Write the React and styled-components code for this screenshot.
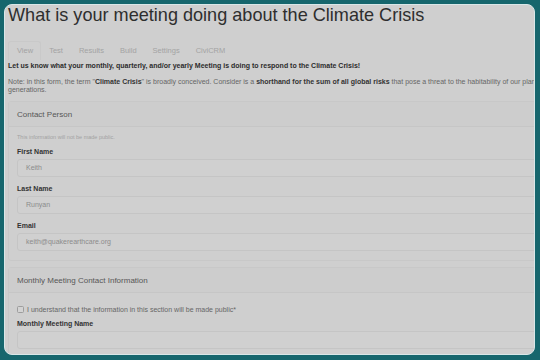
import React from "react";
import styled, { createGlobalStyle } from "styled-components";

const Global = createGlobalStyle`
  html, body { margin: 0; padding: 0; background: #16666d; }
  body { font-family: "Liberation Sans", Arial, sans-serif; }
  * { box-sizing: border-box; }
`;

const Frame = styled.div`
  width: 540px;
  height: 360px;
  padding: 4px 5px 5px 4px;
  background: #16666d;
`;

const Card = styled.div`
  height: 100%;
  background: #cfcfcf;
  border: 1px solid #d9e7e8;
  border-radius: 8px;
  overflow: hidden;
  padding: 0 0 0 3px;
`;

const Content = styled.div`
  width: 640px;
`;

const Title = styled.h1`
  margin: 1px 0 0;
  font-weight: normal;
  font-size: 18.1px;
  line-height: 18px;
  color: #2e2e2e;
  white-space: nowrap;
`;

const Tabs = styled.div`
  display: flex;
  margin-top: 17px;
  height: 19px;
`;

const Tab = styled.div`
  padding: 0 7px 0 8px;
  margin-right: -1px;
  font-size: 7.5px;
  line-height: 18px;
  color: #a3a3a3;
  border: 1px solid ${(p) => (p.$active ? "#c9c9c9" : "transparent")};
  border-bottom: none;
  border-radius: 3px 3px 0 0;
`;

const Lead = styled.p`
  margin: 1px 0 0;
  font-size: 7px;
  line-height: 9px;
  font-weight: bold;
  color: #2c2c2c;
  white-space: nowrap;
`;

const Note = styled.p`
  margin: 8px 0 0;
  font-size: 7px;
  line-height: 8px;
  color: #666;
  b { color: #333; }
`;

const Panel = styled.section`
  margin-top: ${(p) => p.$mt}px;
  border: 1px solid #c8c8c8;
  border-radius: 3px;
`;

const PanelHeading = styled.div`
  height: 25px;
  padding: 0 8px;
  font-size: 8px;
  line-height: 25px;
  color: #575757;
  border-bottom: 1px solid #c6c6c6;
  background: #cdcdcd;
`;

const PanelBody = styled.div`
  padding: ${(p) => p.$pt}px 8px 3px;
`;

const Hint = styled.div`
  font-size: 5.5px;
  line-height: 8px;
  color: #a2a2a2;
  margin-bottom: 5px;
`;

const Field = styled.div`
  margin-bottom: 6px;
`;

const Label = styled.div`
  font-size: 7px;
  line-height: 11px;
  font-weight: bold;
  color: #333;
  margin-bottom: 2px;
`;

const Input = styled.div`
  height: 18px;
  border: 1px solid #c5c5c5;
  border-radius: 3px;
  background: #d0d0d0;
  padding: 0 8px;
  font-size: 7px;
  line-height: 16px;
  color: #8c8c8c;
`;

const CheckRow = styled.label`
  display: flex;
  align-items: center;
  gap: 3px;
  height: 10px;
  font-size: 7px;
  color: #666;
  margin-bottom: 4px;
`;

const Box = styled.span`
  width: 7px;
  height: 7px;
  border: 1px solid #9d9d9d;
  border-radius: 1.5px;
  background: #d3d3d3;
  flex: none;
`;

export default function App() {
  return (
    <>
      <Global />
      <Frame>
        <Card>
          <Content>
            <Title>What is your meeting doing about the Climate Crisis</Title>
            <Tabs>
              <Tab $active>View</Tab>
              <Tab>Test</Tab>
              <Tab>Results</Tab>
              <Tab>Build</Tab>
              <Tab>Settings</Tab>
              <Tab>CiviCRM</Tab>
            </Tabs>
            <Lead>
              Let us know what your monthly, quarterly, and/or yearly Meeting is doing to respond to the Climate Crisis!
            </Lead>
            <Note>
              Note: in this form, the term "<b>Climate Crisis</b>" is broadly conceived. Consider is a{" "}
              <b>shorthand for the sum of all global risks</b> that pose a threat to the habitability of our planet for future
              <br />
              generations.
            </Note>
            <Panel $mt={7}>
              <PanelHeading>Contact Person</PanelHeading>
              <PanelBody $pt={6}>
                <Hint>This information will not be made public.</Hint>
                <Field>
                  <Label>First Name</Label>
                  <Input>Keith</Input>
                </Field>
                <Field>
                  <Label>Last Name</Label>
                  <Input>Runyan</Input>
                </Field>
                <Field>
                  <Label>Email</Label>
                  <Input>keith@quakerearthcare.org</Input>
                </Field>
              </PanelBody>
            </Panel>
            <Panel $mt={6}>
              <PanelHeading>Monthly Meeting Contact Information</PanelHeading>
              <PanelBody $pt={11}>
                <CheckRow>
                  <Box />
                  I understand that the information in this section will be made public*
                </CheckRow>
                <Field>
                  <Label>Monthly Meeting Name</Label>
                  <Input />
                </Field>
              </PanelBody>
            </Panel>
          </Content>
        </Card>
      </Frame>
    </>
  );
}
